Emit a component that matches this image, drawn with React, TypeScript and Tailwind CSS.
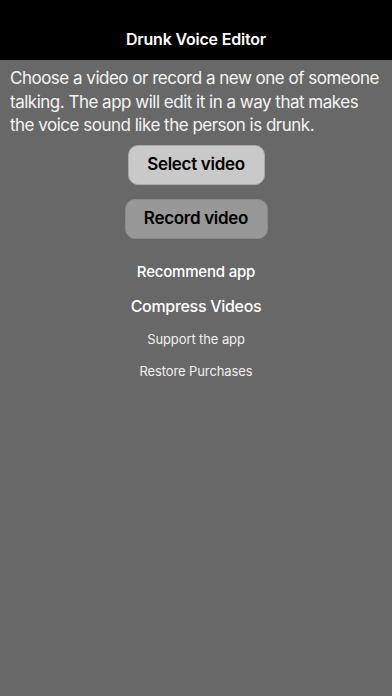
export default function App() {
  return (
    <div
      className="flex h-[696px] w-[392px] flex-col bg-[#686868] text-white"
      style={{ fontFamily: 'Inter, Roboto, "Liberation Sans", Arial, sans-serif' }}
    >
      {/* Nav bar */}
      <div className="flex h-[60px] shrink-0 items-end justify-center bg-black pb-[9px]">
        <h1 className="text-[16px] font-semibold tracking-[-0.2px]">Drunk Voice Editor</h1>
      </div>

      <p className="whitespace-nowrap px-[10px] pt-[7px] text-[17px] leading-[23.5px] tracking-[-0.5px] text-[#f4f4f4]">
        Choose a video or record a new one of someone
        <br />
        talking. The app will edit it in a way that makes
        <br />
        the voice sound like the person is drunk.
      </p>

      <div className="mt-[7px] flex flex-col items-center">
        <button className="h-[40px] w-[137px] rounded-[10px] border border-[#a9a9a9] bg-[#c9c9c9] text-[17px] font-semibold tracking-[-0.3px] text-black">
          Select video
        </button>
        <button className="mt-[14px] h-[40px] w-[143px] rounded-[10px] border border-[#8a8a8a] bg-[#989898] text-[17px] font-semibold tracking-[-0.3px] text-black">
          Record video
        </button>

        <button className="mt-[22px] text-[15px] font-medium tracking-[-0.2px]">Recommend app</button>
        <button className="mt-[11px] text-[16px] font-medium tracking-[-0.3px]">Compress Videos</button>
        <button className="mt-[12px] text-[13px] tracking-[-0.1px] text-[#f0f0f0]">Support the app</button>
        <button className="mt-[12px] text-[13px] tracking-[-0.1px] text-[#f0f0f0]">Restore Purchases</button>
      </div>
    </div>
  );
}
